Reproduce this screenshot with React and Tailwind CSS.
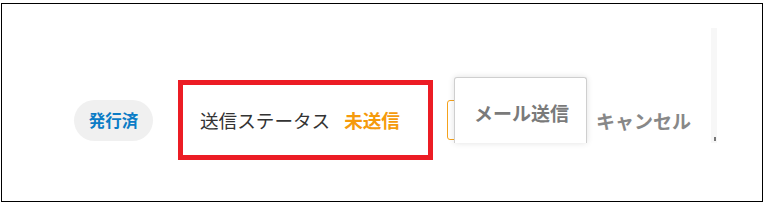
import React from "react";

const jp = { fontFamily: '"Noto Sans CJK JP", "Noto Sans", sans-serif' };

const App = () => {
  return (
    <div className="w-[768px] h-[206px] bg-white pt-[3px] pl-[1px]" style={jp}>
      <div className="relative w-[762px] h-[199px] border border-black overflow-hidden">
        <div className="flex items-center h-[80px] mt-[76px]">
          {/* status pill */}
          <div className="ml-[72px] w-[79px] h-[41px] rounded-full bg-[#f0f0f0] flex items-center justify-center text-[16.5px] font-bold text-[#0b7cc6] leading-none">
            発行済
          </div>

          {/* highlighted send status */}
          <div className="ml-[25px] w-[255px] h-[80px] border-[5px] border-[#ec1c24] flex items-center pl-[17px]">
            <span className="text-[18.6px] text-[#333] leading-none">送信ステータス</span>
            <span className="ml-[14px] text-[18.6px] font-bold text-[#f59a0c] leading-none">未送信</span>
          </div>

          {/* send button (covered by menu) */}
          <div className="ml-[14px] w-[133px] h-[40px] border border-[#f5a21c] rounded-l-[3px]" />

          <span className="ml-[16px] text-[19px] font-bold text-[#888] leading-none">キャンセル</span>
        </div>

        {/* dropdown menu over the button */}
        <div className="absolute left-[452px] top-[73px] w-[133px] h-[66px] bg-white border border-b-0 border-[#cfcfcf] rounded-t-[3px] shadow-[0_0_6px_rgba(0,0,0,0.12)] pt-[24px] pl-[19px]">
          <span className="text-[19px] font-bold text-[#7a7a7a] leading-none">メール送信</span>
        </div>

        {/* thin scroll strip */}
        <div className="absolute left-[709px] top-[24px] w-[6px] h-[115px] bg-[#f7f7f7]" />
        <div className="absolute left-[712px] top-[133px] w-[2px] h-[4px] bg-[#777]" />
      </div>
    </div>
  );
};

export default App;
